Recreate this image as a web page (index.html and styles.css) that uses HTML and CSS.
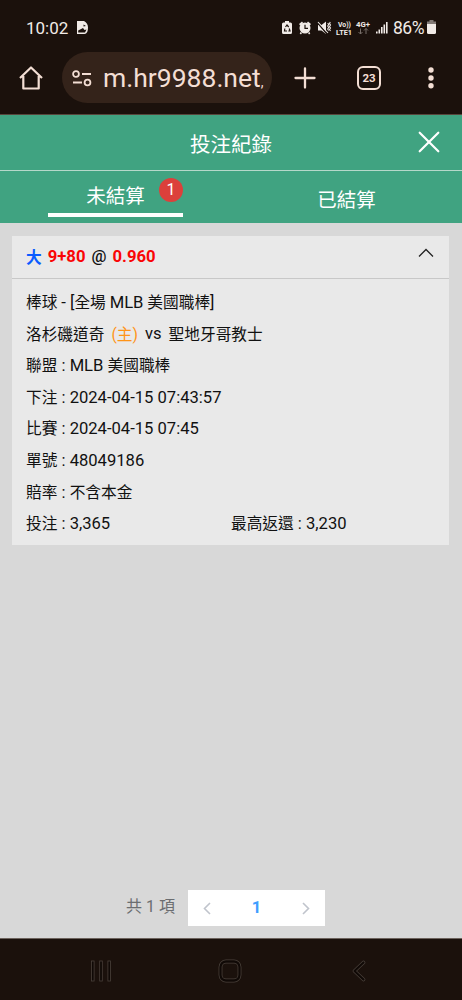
FILE: index.html
```html
<!DOCTYPE html>
<html lang="zh-Hant">
<head>
<meta charset="utf-8">
<meta name="viewport" content="width=device-width">
<title>投注紀錄</title>
<link rel="stylesheet" href="styles.css">
</head>
<body>
<div class="phone">
  <div class="status">
    <span class="clock">10:02</span>
    <svg class="note" width="11" height="13" viewBox="0 0 11 13"><path fill="#f1ebe7" fill-rule="evenodd" d="M0 0H7Q11 2 11 6.500Q11 13 7.500 13H0ZM1.200 11.500H8L9.500 8.500 7.500 9 6 7 1.200 9.500ZM6.500 3.500V5.500L9 5Z"/></svg>
    <svg class="tray" width="106" height="18" viewBox="0 0 106 18">
      <g fill="#f1ebe7">
        <path d="M3 2H7V3.500H8.500Q10 3.500 10 5V13.500Q10 15 8.500 15H1.500Q0 15 0 13.500V5Q0 3.500 1.500 3.500H3Z"/>
        <circle cx="23" cy="9" r="5.500"/>
        <path d="M17 5L20 2.500 21.200 4 18.200 6.500ZM29 5L26 2.500 24.800 4 27.800 6.500ZM18.500 13L20 14 19 15.500 17.700 14.500ZM27.500 13L26 14 27 15.500 28.300 14.500Z"/>
        <path d="M36 6H39.500L44 2.500V15L39.500 11.500H36Z"/>
        <path d="M94 14.500V12.500H95.600V14.500ZM96.500 14.500V10.500H98.100V14.500ZM99 14.500V8H100.600V14.500ZM101.500 14.500V5.500H103.100V14.500ZM104 14.500V3H105.600V14.500Z"/>
      </g>
      <g fill="none" stroke="#1b110c" stroke-width="1.200"><path d="M3.500 8L5 6 6.700 8M2.800 9.500L2.500 12H5M7.200 9.500L8 12H6.300M23 5.700V9.300H26"/><path d="M35 3L45 15" stroke-width="1.500"/></g>
      <g fill="none" stroke="#f1ebe7" stroke-width="1.100"><path d="M36 3L46 14M45.700 4L46.700 5.500 45.700 7 46.700 8.500 45.700 10 46.700 11.500M48.300 3L47.500 4.500 48.500 6 47.500 7.500 48.500 9 47.500 10.500 48.500 12"/></g>
      <g class="mini"><text x="56" y="8" textLength="13" lengthAdjust="spacingAndGlyphs">Vo))</text><text x="54" y="15.500" textLength="16" lengthAdjust="spacingAndGlyphs">LTE1</text><text x="74" y="8" textLength="14" lengthAdjust="spacingAndGlyphs">4G+</text></g>
      <path fill="none" stroke="#776e69" d="M78.500 9.500V15M76.500 13L78.500 15 80.500 13M84 15V9.500M82 11.500L84 9.500 86 11.500"/>
    </svg>
    <span class="percent">86%</span>
    <svg class="battery" width="9" height="14" viewBox="0 0 9 14"><path fill="#827a76" d="M2.500 0H6.500V1.500H9V4H0V1.500H2.500Z"/><path fill="#f1ebe7" d="M0 4H9V12.500Q9 14 7.500 14H1.500Q0 14 0 12.500Z"/></svg>
  </div>
  <div class="browser">
    <svg class="home" width="24" height="24" viewBox="0 0 24 24"><path fill="none" stroke="#f3ded4" stroke-width="2.200" stroke-linejoin="round" d="M1 12L12 1.500 23 12M4.300 10V22.500H19.700V10"/></svg>
    <div class="address">
      <svg class="tune" width="20" height="17" viewBox="0 0 20 17"><g fill="none" stroke="#f3ded4" stroke-width="1.800"><circle cx="4" cy="4" r="2.900"/><path d="M10 4H19M1 12.500H10"/><circle cx="15.500" cy="12.500" r="2.900"/></g></svg>
      <span class="url">m.hr9988.net<i class="clip">,</i></span>
    </div>
    <svg class="plus" width="22" height="22" viewBox="0 0 22 22"><path stroke="#f3ded4" stroke-width="2.300" stroke-linecap="round" d="M11 1.500V20.500M1.500 11H20.500"/></svg>
    <span class="tabcount">23</span>
    <svg class="more" width="6" height="22" viewBox="0 0 6 22"><g fill="#f3ded4"><circle cx="3" cy="3" r="2.700"/><circle cx="3" cy="11" r="2.700"/><circle cx="3" cy="18.700" r="2.700"/></g></svg>
  </div>
  <header class="title">
    <h1>投注紀錄</h1>
    <svg class="close" width="22" height="22" viewBox="0 0 22 22"><path stroke="#fff" stroke-width="2.200" stroke-linecap="round" d="M1.700 1.700L20.300 20.300M20.300 1.700L1.700 20.300"/></svg>
  </header>
  <nav class="tabs">
    <div class="tab"><div class="active">未結算<span class="badge">1</span></div></div>
    <div class="tab">已結算</div>
  </nav>
  <main class="content">
    <section class="card">
      <div class="cardhead">
        <b class="pick">大</b><b class="odds">9+80</b><b class="at">@</b><b class="price">0.960</b>
        <svg class="chevron" width="16" height="10" viewBox="0 0 16 10"><path fill="none" stroke="#222" stroke-width="1.300" d="M1 8.500L8 1.500 15 8.500"/></svg>
      </div>
      <div class="details">
        <div class="row">棒球 <span class="latin">- [</span>全場 <span class="latin">MLB</span> 美國職棒<span class="latin">]</span></div>
        <div class="row teams"><span>洛杉磯道奇</span><span class="host">(主)</span><span class="vs">vs</span><span>聖地牙哥教士</span></div>
        <div class="row">聯盟<span class="latin"> : MLB </span>美國職棒</div>
        <div class="row">下注<span class="latin"> : 2024-04-15 07:43:57</span></div>
        <div class="row">比賽<span class="latin"> : 2024-04-15 07:45</span></div>
        <div class="row">單號<span class="latin"> : 48049186</span></div>
        <div class="row">賠率<span class="latin"> : </span>不含本金</div>
        <div class="row split"><span>投注<span class="latin"> : 3,365</span></span><span>最高返還<span class="latin"> : 3,230</span></span></div>
      </div>
    </section>
    <footer class="pagination">
      <span class="total">共 1 項</span>
      <div class="pager">
        <svg width="8" height="13" viewBox="0 0 8 13"><path fill="none" stroke="#c0c4cc" stroke-width="1.600" d="M7 1L1.500 6.500 7 12"/></svg>
        <b>1</b>
        <svg width="8" height="13" viewBox="0 0 8 13"><path fill="none" stroke="#c0c4cc" stroke-width="1.600" d="M1 1L6.500 6.500 1 12"/></svg>
      </div>
    </footer>
  </main>
  <div class="system">
    <svg width="20" height="22" viewBox="0 0 20 22"><g fill="#100906" stroke="#4a413b" stroke-width=".8"><rect x=".5" y="1" width="2.600" height="20"/><rect x="8.700" y="1" width="2.600" height="20"/><rect x="16.900" y="1" width="2.600" height="20"/></g></svg>
    <svg width="24" height="24" viewBox="0 0 24 24"><g fill="none"><rect x="2.500" y="2.500" width="19" height="19" rx="5.500" stroke="#4a413b" stroke-width="3.800"/><rect x="2.500" y="2.500" width="19" height="19" rx="5.500" stroke="#100906" stroke-width="2.300"/></g></svg>
    <svg width="14" height="22" viewBox="0 0 14 22"><g fill="none" stroke-linejoin="round" stroke-linecap="round"><path stroke="#4a413b" stroke-width="3.600" d="M11.500 2.500L2.500 11 11.500 19.500"/><path stroke="#100906" stroke-width="2.200" d="M11.500 2.500L2.500 11 11.500 19.500"/></g></svg>
  </div>
</div>
</body>
</html>
```

FILE: styles.css
```css
* { box-sizing: border-box; }
body { margin: 0; font-family: Roboto, "Noto Sans CJK TC", sans-serif; }
svg { display: block; flex: none; }
.phone { width: 462px; height: 1000px; display: flex; flex-direction: column; overflow: hidden; background: #1b110c; }

.status { height: 52px; flex: none; display: flex; align-items: center; padding: 3px 26px 0; color: #f1ebe7; white-space: nowrap; }
.clock { width: 51px; font-size: 17px; }
.tray { margin-left: 194px; margin-right: 5px; }
.mini { fill: #f1ebe7; font-size: 7.5px; font-weight: 700; }
.percent { width: 33px; font-size: 17.500px; letter-spacing: -.5px; }
.battery { margin-left: 1px; margin-top: -1px; }

.browser { height: 62px; flex: none; display: flex; align-items: flex-start; padding-left: 19px; }
.home { margin-top: 14px; }
.address { width: 210px; height: 51px; margin-left: 19px; border-radius: 26px; background: #34231a; display: flex; align-items: center; padding-left: 10px; }
.tune { margin-top: 2px; }
.url { margin-left: 11px; margin-top: 5px; font-size: 26.500px; line-height: 32px; color: #f3ded4; white-space: nowrap; }
.clip { font-size: 14px; font-style: normal; }
.plus { margin: 15px 0 0 22px; }
.tabcount { width: 24px; height: 24px; margin: 14px 0 0 41px; border: 2px solid #f3ded4; border-radius: 6px; color: #f3ded4; font-size: 11.500px; line-height: 20px; font-weight: 700; text-align: center; }
.more { margin: 15px 0 0 47px; }

.title { height: 57px; flex: none; display: flex; align-items: center; justify-content: flex-end; border-top: 1px solid #57463c; border-bottom: 1px solid #b5d8ca; background: #40a381; color: #fff; padding-right: 22px; }
.title h1 { margin: 4px 146px 0 0; font-size: 20.500px; font-weight: 400; line-height: 30px; }
.close { margin-top: -1px; }

.tabs { height: 52px; flex: none; display: flex; background: #40a381; color: #fff; font-size: 19.500px; }
.tab { width: 231px; display: flex; justify-content: center; line-height: 59px; }
.active { position: relative; width: 135px; height: 46px; border-bottom: 4px solid #fff; text-align: center; line-height: 51px; }
.badge { position: absolute; right: 0; top: 7px; width: 24px; height: 24px; border-radius: 50%; background: #dc403b; font-size: 16px; line-height: 24px; }

.content { height: 715px; flex: none; display: flex; flex-direction: column; justify-content: space-between; background: #d8d8d8; padding: 13px 13px 12px 12px; }
.card { background: #e9e9e9; height: 309px; color: #111; font-size: 15.700px; }
.cardhead { height: 43px; display: flex; align-items: center; border-bottom: 1px solid #c8c8c8; padding: 0 15px 1px 14px; font-size: 16.700px; }
.pick { color: #0b5cff; font-size: 15.700px; margin-right: 6px; }
.odds, .price { color: #fa0505; }
.at { margin: 0 6px; font-weight: 500; }
.chevron { margin: -7px 0 0 auto; }
.details { padding: 7px 14px 0; }
.row { height: 31.600px; line-height: 34px; white-space: nowrap; }
.latin { font-size: 16.600px; }
.teams { display: flex; }
.host { color: #ff9417; margin-left: 7px; }
.vs { margin: 0 7px; font-size: 16.600px; line-height: 32px; }
.split { display: grid; grid-template-columns: 205px 1fr; }

.pagination { display: flex; align-items: center; padding-left: 114px; }
.total { width: 62px; color: #6b6d70; font-size: 16px; line-height: 32px; margin-top: -3px; white-space: nowrap; }
.pager { width: 137px; height: 36px; display: flex; align-items: center; justify-content: space-between; padding: 0 15px; background: #fff; color: #409eff; font-size: 16.500px; }
.pager b { margin-top: -1px; }

.system { flex: 1; border-top: 1px solid #6c625c; display: flex; align-items: center; justify-content: space-between; padding: 2px 96px 0 91px; }
.system svg:nth-child(2) { margin-right: 3px; }
```
